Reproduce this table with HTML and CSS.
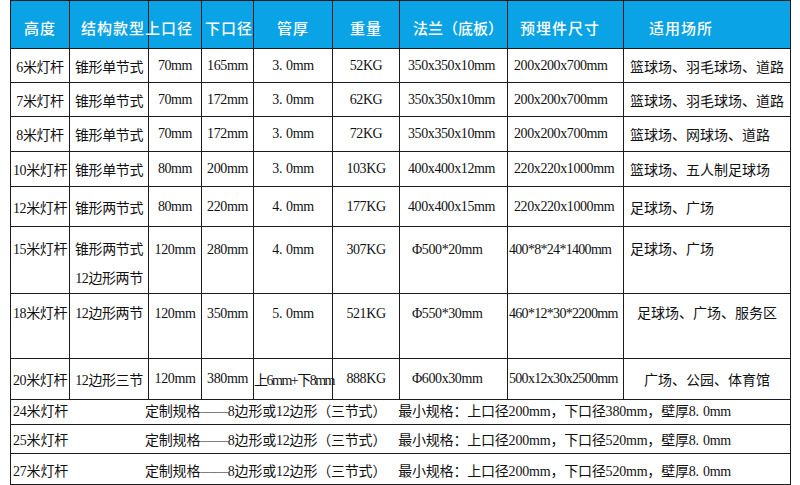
FILE: index.html
```html
<!DOCTYPE html>
<html lang="zh-CN">
<head>
<meta charset="utf-8">
<title>灯杆规格表</title>
<link rel="stylesheet" href="styles.css">
</head>
<body>
<table class="spec">
  <colgroup>
    <col class="c-height"><col class="c-type"><col class="c-top"><col class="c-bot"><col class="c-thick"><col class="c-weight"><col class="c-flange"><col class="c-embed"><col class="c-use">
  </colgroup>
  <thead>
    <tr class="head">
      <th class="h-height">高度</th>
      <th class="h-type">结构款型</th>
      <th class="h-top">上口径</th>
      <th class="h-bot">下口径</th>
      <th>管厚</th>
      <th>重量</th>
      <th class="h-flange">法兰（底板）</th>
      <th class="h-embed">预埋件尺寸</th>
      <th class="h-use">适用场所</th>
    </tr>
  </thead>
  <tbody>
    <tr class="row-34">
      <td>6米灯杆</td><td>锥形单节式</td><td>70mm</td><td>165mm</td><td>3<span class="pt">.</span>0mm</td><td>52KG</td><td class="flange">350x350x10mm</td><td class="embed">200x200x700mm</td><td class="use">篮球场、羽毛球场、道路</td>
    </tr>
    <tr class="row-34">
      <td>7米灯杆</td><td>锥形单节式</td><td>70mm</td><td>172mm</td><td>3<span class="pt">.</span>0mm</td><td>62KG</td><td class="flange">350x350x10mm</td><td class="embed">200x200x700mm</td><td class="use">篮球场、羽毛球场、道路</td>
    </tr>
    <tr class="row-35">
      <td>8米灯杆</td><td>锥形单节式</td><td>70mm</td><td>172mm</td><td>3<span class="pt">.</span>0mm</td><td>72KG</td><td class="flange">350x350x10mm</td><td class="embed">200x200x700mm</td><td class="use">篮球场、网球场、道路</td>
    </tr>
    <tr class="row-35">
      <td>10米灯杆</td><td>锥形单节式</td><td>80mm</td><td>200mm</td><td>3<span class="pt">.</span>0mm</td><td>103KG</td><td class="flange">400x400x12mm</td><td class="embed">220x220x1000mm</td><td class="use">篮球场、五人制足球场</td>
    </tr>
    <tr class="row-40">
      <td>12米灯杆</td><td>锥形两节式</td><td>80mm</td><td>220mm</td><td>4<span class="pt">.</span>0mm</td><td>177KG</td><td class="flange">400x400x15mm</td><td class="embed">220x220x1000mm</td><td class="use">足球场、广场</td>
    </tr>
    <tr class="row-tall row-15">
      <td>15米灯杆</td><td>锥形两节式<br>12边形两节</td><td>120mm</td><td>280mm</td><td>4<span class="pt">.</span>0mm</td><td>307KG</td><td class="flange phi">Φ500*20mm</td><td class="embed long">400*8*24*1400mm</td><td class="use">足球场、广场</td>
    </tr>
    <tr class="row-tall row-18">
      <td>18米灯杆</td><td>12边形两节</td><td>120mm</td><td>350mm</td><td>5<span class="pt">.</span>0mm</td><td>521KG</td><td class="flange phi">Φ550*30mm</td><td class="embed long">460*12*30*2200mm</td><td class="use centered">足球场、广场、服务区</td>
    </tr>
    <tr class="row-41">
      <td>20米灯杆</td><td>12边形三节</td><td>120mm</td><td>380mm</td><td class="tight">上6mm+下8mm</td><td>888KG</td><td class="flange phi">Φ600x30mm</td><td class="embed long">500x12x30x2500mm</td><td class="use centered">广场、公园、体育馆</td>
    </tr>
    <tr class="custom row-25">
      <td colspan="9"><span class="label">24米灯杆</span>定制规格——8边形或12边形（三节式）<span class="min">最小规格：上口径200mm，下口径380mm，壁厚8<span class="pt">.</span>0mm</span></td>
    </tr>
    <tr class="custom row-29">
      <td colspan="9"><span class="label">25米灯杆</span>定制规格——8边形或12边形（三节式）<span class="min">最小规格：上口径200mm，下口径520mm，壁厚8<span class="pt">.</span>0mm</span></td>
    </tr>
    <tr class="custom row-31">
      <td colspan="9"><span class="label">27米灯杆</span>定制规格——8边形或12边形（三节式）<span class="min">最小规格：上口径200mm，下口径520mm，壁厚8<span class="pt">.</span>0mm</span></td>
    </tr>
  </tbody>
</table>
<div class="baseline"></div>
</body>
</html>
```

FILE: styles.css
```css
html, body {
  margin: 0;
  padding: 0;
  background: #ffffff;
}

body {
  font-family: "Liberation Serif", "Noto Sans CJK SC", serif;
  color: #111111;
}

.spec {
  margin-left: 10px;
  width: 781px;
  table-layout: fixed;
  border-collapse: collapse;
  font-size: 14px;
  letter-spacing: -0.4px;
}

.c-height { width: 59px; }
.c-type { width: 79px; }
.c-top { width: 53px; }
.c-bot { width: 52px; }
.c-thick { width: 79px; }
.c-weight { width: 67px; }
.c-flange { width: 108px; }
.c-embed { width: 116px; }
.c-use { width: 167px; }

.spec th,
.spec td {
  border: 1px solid #1c1c1c;
  padding: 0;
  white-space: nowrap;
  text-align: center;
  vertical-align: middle;
  overflow: visible;
}

.pt {
  margin-right: 4px;
}

.head {
  height: 48px;
}

.head th {
  background: #0aa3e6;
  color: #ffffff;
  font-family: "Noto Sans CJK SC", sans-serif;
  font-size: 15px;
  font-weight: 500;
  letter-spacing: 1px;
  padding-top: 5px;
}

.head .h-type {
  text-align: left;
  padding-left: 11px;
}

.head .h-top {
  text-align: left;
  text-indent: -4px;
}

.head .h-bot {
  text-align: left;
  padding-left: 3px;
}

.head .h-flange {
  text-align: left;
  padding-left: 13px;
  letter-spacing: 0;
}

.head .h-embed {
  text-align: left;
  padding-left: 12px;
}

.head .h-use {
  text-align: left;
  padding-left: 25px;
}

.row-34 { height: 34px; }
.row-35 { height: 35px; }
.row-40 { height: 40px; }
.row-41 { height: 41px; }
.row-tall { height: 65px; }
.row-25 { height: 25px; }
.row-29 { height: 29px; }
.row-31 { height: 31px; }

.row-tall td {
  vertical-align: top;
  line-height: 29px;
}

.row-15 td { padding-top: 8px; }
.row-18 td { padding-top: 5px; }

.spec td.flange {
  text-align: left;
  padding-left: 8px;
}

.spec td.flange.phi {
  padding-left: 12px;
}

.spec td.embed {
  text-align: left;
  padding-left: 6px;
}

.spec td.embed.long {
  padding-left: 1px;
  letter-spacing: -0.7px;
}

.spec td.use {
  text-align: left;
  padding-left: 6px;
  letter-spacing: 0;
}

.spec td.use.centered {
  text-align: center;
  padding-left: 0;
}

.spec td.tight {
  letter-spacing: -1.5px;
}

.custom td {
  text-align: left;
  vertical-align: bottom;
  line-height: 20px;
  padding-bottom: 2px;
  letter-spacing: -0.2px;
}

.label {
  display: inline-block;
  width: 132px;
  padding-left: 2px;
}

.min {
  margin-left: 12px;
}

.baseline {
  margin-left: 9px;
  width: 789px;
  height: 3px;
  background: #2e2e2e;
}
```
